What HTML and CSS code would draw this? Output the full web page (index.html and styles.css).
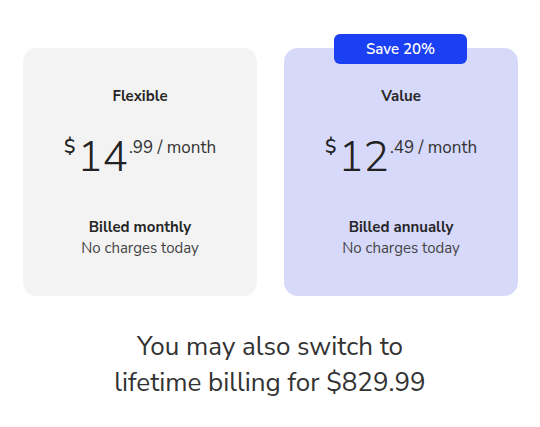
FILE: index.html
```html
<!DOCTYPE html>
<html>
<head>
<meta charset="utf-8">
<link rel="stylesheet" href="styles.css">
</head>
<body>
<div class="page">
  <div class="plans">
    <div class="card card-flex">
      <div class="name">Flexible</div>
      <div class="price"><span class="cur">$</span><span class="big">14</span><span class="rest">.99 / month</span></div>
      <div class="billed">Billed monthly</div>
      <div class="note">No charges today</div>
    </div>
    <div class="card card-value">
      <div class="badge">Save 20%</div>
      <div class="name">Value</div>
      <div class="price"><span class="cur">$</span><span class="big">12</span><span class="rest">.49 / month</span></div>
      <div class="billed">Billed annually</div>
      <div class="note">No charges today</div>
    </div>
  </div>
  <p class="lifetime">You may also switch to<br>lifetime billing for $829.99</p>
</div>
</body>
</html>
```

FILE: styles.css
```css
* { box-sizing: border-box; }
html, body { margin: 0; padding: 0; background: #ffffff; }
body {
  font-family: "Nunito Sans", Lato, "Open Sans", sans-serif;
  color: #222;
  width: 540px;
  height: 427px;
  overflow: hidden;
}
.page { padding-top: 48px; }
.plans {
  display: grid;
  grid-template-columns: 234px 234px;
  column-gap: 27px;
  padding-left: 23px;
}
.card {
  position: relative;
  height: 248px;
  border-radius: 14px;
  display: flex;
  flex-direction: column;
  align-items: center;
  padding-top: 38px;
}
.card-flex { background: #f3f3f3; }
.card-value { background: #d7d9fb; }
.badge {
  position: absolute;
  top: -14px;
  left: 50px;
  width: 133px;
  height: 30px;
  border-radius: 6px;
  background: #1b3ff2;
  color: #fff;
  font-size: 15px;
  font-weight: 600;
  display: flex;
  align-items: center;
  justify-content: center;
}
.name {
  font-size: 15px;
  font-weight: 700;
  line-height: 20px;
  color: #262626;
}
.price {
  margin-top: 26px;
  display: flex;
  align-items: flex-start;
  color: #222;
  height: 50px;
}
.cur { font-size: 19px; font-weight: 600; line-height: 20px; margin-top: 5px; margin-right: 2px; }
.big { font-size: 43px; font-weight: 300; line-height: 50px; margin-top: 0; letter-spacing: -1px; }
.rest { font-size: 17px; font-weight: 400; line-height: 20px; margin-top: 6px; margin-left: 2px; color: #333; }
.billed {
  margin-top: 35px;
  font-size: 15px;
  font-weight: 700;
  line-height: 20px;
  color: #262626;
}
.note {
  margin-top: 1px;
  font-size: 15px;
  line-height: 20px;
  color: #444;
}
.lifetime {
  margin: 33px 0 0;
  text-align: center;
  font-size: 26px;
  font-weight: 400;
  line-height: 36px;
  color: #333;
}
```
